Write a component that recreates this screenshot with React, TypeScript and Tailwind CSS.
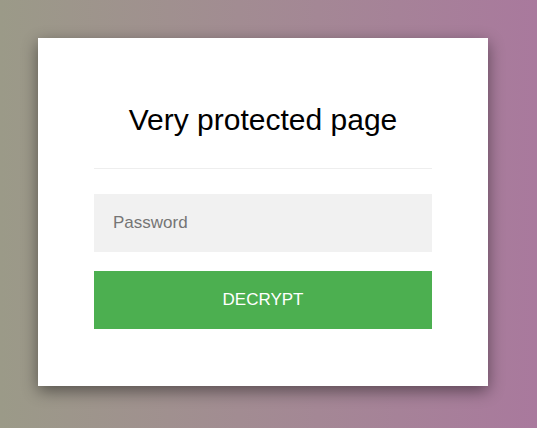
export default function App() {
  return (
    <div
      className="h-[428px] w-full bg-gradient-to-r from-[#9b9a88] to-[#a9799d] pl-[38px] pt-[38px]"
      style={{ fontFamily: '"Liberation Sans", Arial, sans-serif' }}
    >
      <div className="flex w-[450px] flex-col bg-white px-[56px] pt-[64px] pb-[57px] shadow-[0_5px_15px_rgba(0,0,0,0.45)]">
        <h1 className="text-center text-[30px] leading-[36px] text-black">Very protected page</h1>
        <div className="mt-[30px] h-px bg-[#eeeeee]" />
        <input
          type="password"
          placeholder="Password"
          className="mt-[25px] h-[58px] w-full bg-[#f1f1f1] px-[19px] text-[17px] text-[#333] outline-none placeholder:text-[#757575]"
        />
        <button className="mt-[19px] h-[58px] w-full bg-[#4caf50] text-[17px] text-white">DECRYPT</button>
      </div>
    </div>
  );
}
